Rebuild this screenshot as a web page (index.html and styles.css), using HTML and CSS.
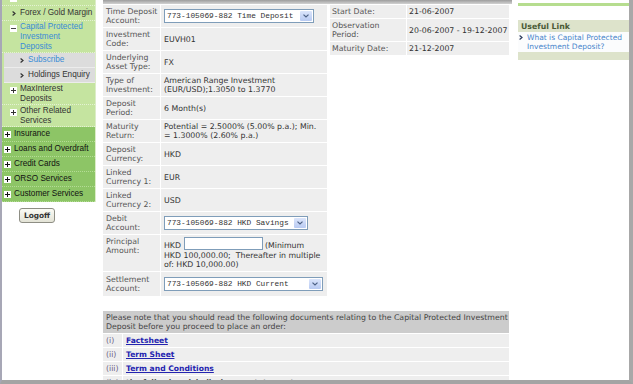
FILE: index.html
```html
<!DOCTYPE html>
<html lang="en">
<head>
<meta charset="utf-8">
<title>Capital Protected Investment Deposit - Subscribe</title>
<link rel="stylesheet" href="styles.css">
</head>
<body>
<div class="frame">
  <nav class="nav">
    <div class="menu">
      <div class="item"><span class="ico"><svg width="7" height="7" viewBox="0 0 7 7"><rect width="7" height="7" fill="#fff"/><path d="M1.5 3.5h4" stroke="#333" stroke-width="1"/></svg></span><span>Investment</span></div>
      <div class="item"><span class="ico"><svg class="chev" width="4" height="5" viewBox="0 0 4 5"><path d="M0.6 0.5L3 2.5L0.6 4.5" fill="none" stroke="#333" stroke-width="1.2"/></svg></span><span>Forex / Gold Margin</span></div>
      <div class="item ml cur"><span class="ico"><svg width="7" height="7" viewBox="0 0 7 7"><rect width="7" height="7" fill="#fff"/><path d="M1 3.5h5" stroke="#444" stroke-width="1"/></svg></span><span>Capital Protected<br>Investment<br>Deposits</span></div>
      <div class="item sub cur"><span class="ico"><svg class="chev" width="4" height="5" viewBox="0 0 4 5"><path d="M0.6 0.5L3 2.5L0.6 4.5" fill="none" stroke="#333" stroke-width="1.2"/></svg></span><span>Subscribe</span></div>
      <div class="item sub"><span class="ico"><svg class="chev" width="4" height="5" viewBox="0 0 4 5"><path d="M0.6 0.5L3 2.5L0.6 4.5" fill="none" stroke="#333" stroke-width="1.2"/></svg></span><span>Holdings Enquiry</span></div>
      <div class="item ml"><span class="ico"><svg width="7" height="7" viewBox="0 0 7 7"><rect width="7" height="7" fill="#fff"/><path d="M1 3.5h5M3.5 1v5" stroke="#333" stroke-width="1"/></svg></span><span>MaxInterest<br>Deposits</span></div>
      <div class="item ml"><span class="ico"><svg width="7" height="7" viewBox="0 0 7 7"><rect width="7" height="7" fill="#fff"/><path d="M1 3.5h5M3.5 1v5" stroke="#333" stroke-width="1"/></svg></span><span>Other Related<br>Services</span></div>
      <div class="item dark"><span class="ico"><svg width="7" height="7" viewBox="0 0 7 7"><rect width="7" height="7" fill="#fff"/><path d="M1 3.5h5M3.5 1v5" stroke="#111" stroke-width="1"/></svg></span><span>Insurance</span></div>
      <div class="item dark"><span class="ico"><svg width="7" height="7" viewBox="0 0 7 7"><rect width="7" height="7" fill="#fff"/><path d="M1 3.5h5M3.5 1v5" stroke="#111" stroke-width="1"/></svg></span><span>Loans and Overdraft</span></div>
      <div class="item dark"><span class="ico"><svg width="7" height="7" viewBox="0 0 7 7"><rect width="7" height="7" fill="#fff"/><path d="M1 3.5h5M3.5 1v5" stroke="#111" stroke-width="1"/></svg></span><span>Credit Cards</span></div>
      <div class="item dark"><span class="ico"><svg width="7" height="7" viewBox="0 0 7 7"><rect width="7" height="7" fill="#fff"/><path d="M1 3.5h5M3.5 1v5" stroke="#111" stroke-width="1"/></svg></span><span>ORSO Services</span></div>
      <div class="item dark"><span class="ico"><svg width="7" height="7" viewBox="0 0 7 7"><rect width="7" height="7" fill="#fff"/><path d="M1 3.5h5M3.5 1v5" stroke="#111" stroke-width="1"/></svg></span><span>Customer Services</span></div>
    </div>
    <button class="logoff" type="button">Logoff</button>
  </nav>

  <main class="content">
    <div class="topbar"></div>
    <div class="upper">
      <table class="form">
        <colgroup><col class="c-lbl"><col></colgroup>
        <tr><td class="lbl">Time Deposit<br>Account:</td><td class="val"><div class="sel w-td"><span>773-105069-882 Time Deposit</span><i class="dd"><svg width="6" height="4" viewBox="0 0 6 4"><path d="M0.5 0.6L3 3L5.5 0.6" fill="none" stroke="#4d6185" stroke-width="1.2"/></svg></i></div></td></tr>
        <tr><td class="lbl">Investment<br>Code:</td><td class="val">EUVH01</td></tr>
        <tr><td class="lbl">Underlying<br>Asset Type:</td><td class="val">FX</td></tr>
        <tr><td class="lbl">Type of<br>Investment:</td><td class="val">American Range Investment<br>(EUR/USD);1.3050 to 1.3770</td></tr>
        <tr><td class="lbl">Deposit<br>Period:</td><td class="val">6 Month(s)</td></tr>
        <tr><td class="lbl">Maturity<br>Return:</td><td class="val">Potential = 2.5000% (5.00% p.a.); Min.<br>= 1.3000% (2.60% p.a.)</td></tr>
        <tr><td class="lbl">Deposit<br>Currency:</td><td class="val">HKD</td></tr>
        <tr><td class="lbl">Linked<br>Currency 1:</td><td class="val">EUR</td></tr>
        <tr><td class="lbl">Linked<br>Currency 2:</td><td class="val">USD</td></tr>
        <tr><td class="lbl">Debit<br>Account:</td><td class="val"><div class="sel w-debit"><span>773-105069-882 HKD Savings</span><i class="dd"><svg width="6" height="4" viewBox="0 0 6 4"><path d="M0.5 0.6L3 3L5.5 0.6" fill="none" stroke="#4d6185" stroke-width="1.2"/></svg></i></div></td></tr>
        <tr class="top"><td class="lbl">Principal<br>Amount:</td><td class="val"><div class="pline"><span>HKD</span><span class="inp"></span><span>(Minimum</span></div>HKD 100,000.00;&nbsp; Thereafter in multiple<br>of: HKD 10,000.00)</td></tr>
        <tr class="tall"><td class="lbl">Settlement<br>Account:</td><td class="val"><div class="sel w-settle"><span>773-105069-882 HKD Current</span><i class="dd"><svg width="6" height="4" viewBox="0 0 6 4"><path d="M0.5 0.6L3 3L5.5 0.6" fill="none" stroke="#4d6185" stroke-width="1.2"/></svg></i></div></td></tr>
      </table>
      <table class="dates">
        <colgroup><col class="c-dlbl"><col></colgroup>
        <tr><td class="lbl">Start Date:</td><td class="val">21-06-2007</td></tr>
        <tr><td class="lbl">Observation<br>Period:</td><td class="val">20-06-2007 - 19-12-2007</td></tr>
        <tr><td class="lbl">Maturity Date:</td><td class="val">21-12-2007</td></tr>
      </table>
    </div>
    <table class="notice">
      <colgroup><col class="c-num"><col></colgroup>
      <tr><td class="hd" colspan="2">Please note that you should read the following documents relating to the Capital Protected Investment<br>Deposit before you proceed to place an order:</td></tr>
      <tr><td class="num">(i)</td><td><a href="#">Factsheet</a></td></tr>
      <tr><td class="num">(ii)</td><td><a href="#">Term Sheet</a></td></tr>
      <tr><td class="num">(iii)</td><td><a href="#">Term and Conditions</a></td></tr>
      <tr><td class="num">(iv)</td><td><a href="#" class="plain">the following risk disclosure statement</a></td></tr>
    </table>
  </main>

  <aside class="side">
    <div class="rule"></div>
    <div class="useful">
      <div class="uhd">Useful Link</div>
      <div class="ulk"><span class="uarr"><svg width="4" height="5" viewBox="0 0 4 5"><path d="M0.6 0.5L3 2.5L0.6 4.5" fill="none" stroke="#2b3b5c" stroke-width="1.2"/></svg></span><a href="#">What is Capital Protected Investment Deposit?</a></div>
      <div class="uft"></div>
    </div>
  </aside>
</div>
</body>
</html>
```

FILE: styles.css
```css
* { box-sizing: border-box; }
html, body { margin: 0; padding: 0; }
body {
  width: 633px; height: 384px; overflow: hidden; background: #fff;
  font-family: "DejaVu Sans", Verdana, sans-serif; font-size: 7.8px; line-height: 9px; color: #333;
}
.frame {
  width: 633px; height: 384px; overflow: hidden; display: flex; align-items: flex-start;
  border-left: 2px solid #a7a7b6; border-right: 4px solid #a8a8a8; border-bottom: 4px solid #a4a4a4;
  background: #fff;
}

/* navigation */
.nav { width: 94px; flex: none; }
.menu {
  margin-top: -9px; background: #c5e4a0; border-right: 1px solid #dcedc8;
  font-family: "Liberation Sans", Arial, sans-serif; font-size: 8.2px; line-height: 10px; color: #333;
}
.item { display: flex; align-items: flex-start; padding: 2px 0 2px 8px; border-bottom: 1px dotted #e4f2d3; white-space: nowrap; }
.item.ml { padding-top: 1px; padding-bottom: 0; }
.ico { width: 10px; height: 10px; flex: none; display: flex; align-items: center; }
.ml .ico { align-items: flex-start; padding-top: 3px; }
.chev { margin-left: 2px; }
.cur { color: #3a8cd6; }
.item.sub { margin-left: 2px; padding-left: 14px; background: #dcdcdc; border-bottom: 1px solid #ececec; }
.item.dark { background: #8dc566; border-bottom: 1px dotted #b4dc95; padding-left: 2px; color: #111; }
.logoff {
  display: block; margin: 6px 0 0 17px; width: 36px; height: 15px; padding: 0;
  font-family: "DejaVu Sans", Verdana, sans-serif; font-weight: bold; font-size: 7.4px; color: #333;
  background: linear-gradient(#fbfbf5, #e3e3d6); border: 1px solid #8e8e84; border-radius: 3px;
}

/* content */
.content { width: 411px; margin-left: 6px; flex: none; }
.topbar { margin-left: 1px; width: 409px; height: 4px; background: linear-gradient(#9d9d9d, #d2d2d2); }
.upper { display: flex; align-items: flex-start; gap: 1px; }
table { border-collapse: separate; border-spacing: 1px; table-layout: fixed; }
td { padding: 2px 3px; vertical-align: middle; white-space: nowrap; }
.lbl { color: #555; padding-right: 1px; }
.val { color: #333; }
.form { width: 226px; }
.form td, .dates td { background: #eeeeee; }
.c-lbl { width: 57px; }
.form tr.top td { vertical-align: top; padding-top: 2px; padding-bottom: 2px; }
.form tr.tall td { padding-top: 3px; padding-bottom: 3px; }
.dates { width: 181px; margin-top: 0; }
.dates td { padding: 2px 2px; }
.c-dlbl { width: 76px; }

.sel {
  display: flex; align-items: center; justify-content: space-between; height: 14px;
  border: 1px solid #7f9db9; background: #fff; padding: 0 1px 0 2px;
  font-family: "Liberation Mono", "Courier New", monospace; font-size: 7.8px; color: #333; overflow: hidden;
}
.w-td { width: 150px; }
.w-debit { width: 144px; }
.w-settle { width: 159px; }
.dd {
  width: 12px; height: 10px; flex: none; display: flex; align-items: center; justify-content: center;
  background: linear-gradient(#dbe5fb, #b8caf2); border-radius: 1px;
}
.pline { display: flex; align-items: flex-end; gap: 2px; height: 14px; padding-bottom: 1px; }
.inp { width: 79px; height: 13px; border: 1px solid #7f9db9; background: #fff; margin-left: 1px; }

/* notice */
.notice { width: 408px; margin-top: 13px; }
.c-num { width: 19px; }
.notice td { background: #eeeeee; }
.notice td.hd { background: #cccccc; color: #444; padding: 2px 3px; }
.notice td.num { color: #6b5f86; padding: 2px 3px; }
.notice a { color: #2424b0; font-weight: bold; font-size: 7.6px; text-decoration: underline; }
.notice a.plain { color: #222; text-decoration: none; }

/* side */
.side { width: 111px; flex: none; margin-left: 5px; padding-top: 3px; }
.rule { height: 3px; background: #b6dd8f; }
.useful { margin-top: 14px; }
.uhd { background: #dde3cb; color: #4a5a36; font-weight: bold; padding: 2px 3px 1px; line-height: 9px; }
.ulk { display: flex; align-items: flex-start; background: #fbfcfd; padding: 1px 0 1px 1px; font-size: 7.5px; }
.uarr { width: 8px; flex: none; height: 9px; display: flex; align-items: center; }
.ulk a { color: #4a86cc; text-decoration: none; }
.uft { height: 8px; background: #dde3cb; }
```
